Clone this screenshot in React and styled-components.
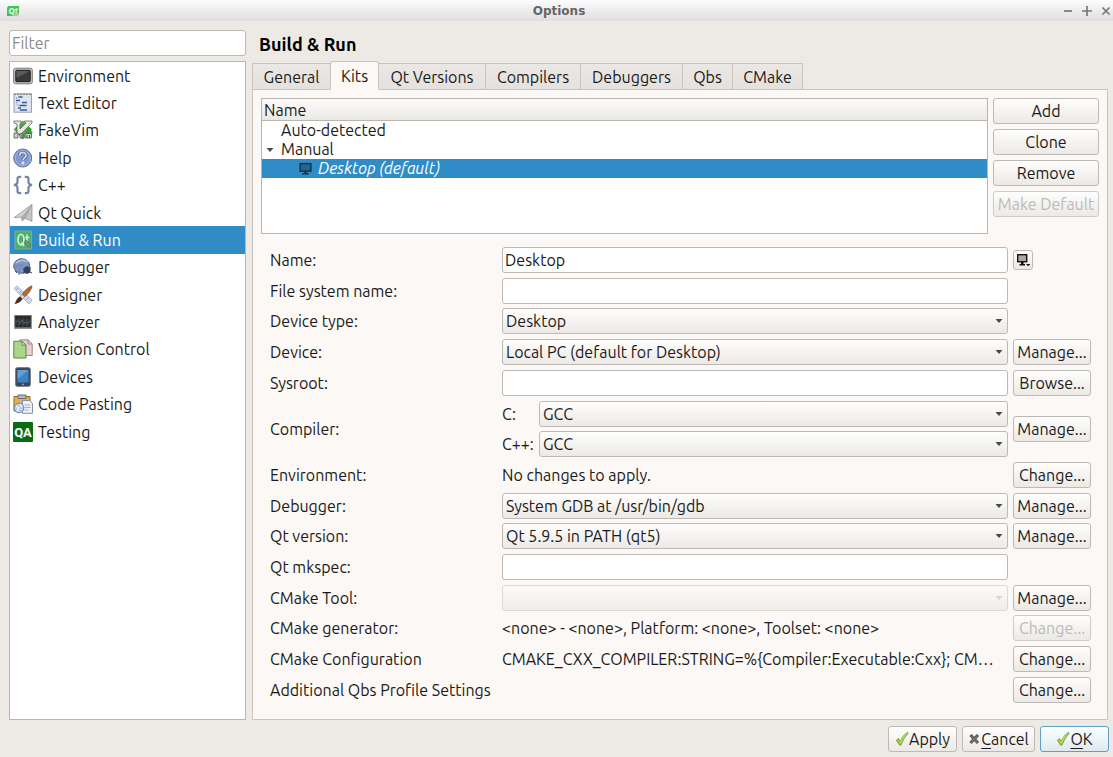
import React from "react";
import styled, { createGlobalStyle, css } from "styled-components";

const GlobalStyle = createGlobalStyle`
  *, *::before, *::after { box-sizing: border-box; }
  body { margin: 0; background: #edeae6; }
  body, button, input, select {
    font-family: Ubuntu, "Noto Sans", "Open Sans", sans-serif;
    font-size: 16px;
    color: #1a1a1a;
  }
  ul { list-style: none; margin: 0; padding: 0; }
`;

const raised = css`
  border: 1px solid #bdb9b6;
  border-radius: 3px;
  background: linear-gradient(#fefefd, #ece9e6);
`;

const Dialog = styled.div`
  display: flex;
  flex-direction: column;
  min-height: 100vh;
`;

const TitleBar = styled.header`
  display: grid;
  grid-template-columns: 1fr auto 1fr;
  align-items: center;
  height: 21px;
  padding: 0 1px 0 6px;
  background: linear-gradient(#fdfdfd, #dfdddd);
`;

const WindowTitle = styled.h1`
  margin: 0;
  font-family: "DejaVu Sans", sans-serif;
  font-size: 12px;
  font-weight: 700;
  line-height: 20px;
  color: #666;
`;

const WindowButtons = styled.div`
  display: flex;
  justify-content: flex-end;
  gap: 6px;
`;

const WindowButton = styled.button`
  display: flex;
  width: 13px;
  height: 18px;
  padding: 0;
  border: 0;
  align-items: center;
  justify-content: center;
  background: none;
`;

const Body = styled.div`
  flex: 1;
  display: grid;
  grid-template-columns: 237px minmax(0, 1fr);
  gap: 6px;
  padding: 9px 5px 0 9px;
`;

const Sidebar = styled.nav`
  display: flex;
  flex-direction: column;
  gap: 5px;
`;

const TextBox = styled.input`
  width: 100%;
  height: 26px;
  padding: 0 2px;
  border: 1px solid #bdb9b6;
  border-radius: 3px;
  background: #fff;
  outline: none;
  &::placeholder { color: #8c8c8c; opacity: 1; }
`;

const CategoryList = styled.ul`
  flex: 1;
  display: grid;
  grid-template-rows: repeat(24, 1fr);
  border: 1px solid #b9b5b1;
  background: #fff;
`;

const Category = styled.li`
  display: flex;
  align-items: center;
  gap: 5px;
  padding-left: 3px;
  line-height: 22px;
  background: ${(p) => (p.$selected ? "#308cc6" : "transparent")};
  color: ${(p) => (p.$selected ? "#fff" : "inherit")};
  svg { flex: none; }
`;

const Main = styled.main`
  display: flex;
  flex-direction: column;
  min-width: 0;
`;

const PageTitle = styled.h2`
  margin: 0;
  padding: 0 7px;
  height: 30px;
  font-size: 18px;
  line-height: 28px;
  color: #000;
`;

const TabBar = styled.div`
  display: flex;
  align-items: flex-end;
  height: 30px;
  margin-bottom: -1px;
  z-index: 1;
`;

const Tab = styled.button`
  width: ${(p) => p.$width}px;
  height: ${(p) => (p.$active ? 29 : 27)}px;
  padding: 0;
  border: 1px solid #c9c4c1;
  border-right-width: ${(p) => (p.$last || p.$active ? 1 : 0)}px;
  border-left-width: ${(p) => (p.$afterActive ? 0 : 1)}px;
  border-bottom-color: ${(p) => (p.$active ? "#fcf8f5" : "#c9c4c1")};
  border-radius: ${(p) => (p.$active ? "3px 3px 0 0" : "0")};
  background: ${(p) => (p.$active ? "#fcf8f5" : "linear-gradient(#ebe7e4, #e5e1de)")};
  white-space: nowrap;
`;

const Panel = styled.section`
  flex: 1;
  display: flex;
  flex-direction: column;
  gap: 13px;
  padding: 8px 8px 16px;
  border: 1px solid #c9c4c1;
  background: #fcf8f5;
`;

const KitArea = styled.div`
  display: flex;
  gap: 5px;
`;

const KitTree = styled.div`
  flex: 1;
  height: 136px;
  border: 1px solid #b9b5b1;
  background: #fff;
`;

const TreeHeader = styled.div`
  height: 22px;
  padding: 0 2px;
  border-bottom: 1px solid #b9b5b1;
  background: linear-gradient(#fcfbfa, #e9e8e4);
  line-height: 23px;
`;

const TreeRow = styled.li`
  display: flex;
  align-items: center;
  height: 19px;
  line-height: 19px;
  padding-left: ${(p) => (p.$level === 2 ? 37 : 2)}px;
  gap: ${(p) => (p.$level === 2 ? 6 : 5)}px;
  background: ${(p) => (p.$selected ? "#308cc6" : "transparent")};
  color: ${(p) => (p.$selected ? "#fff" : "inherit")};
  font-style: ${(p) => (p.$selected ? "italic" : "normal")};
`;

const BranchMark = styled.span`
  display: flex;
  justify-content: center;
  width: 12px;
`;

const KitActions = styled.div`
  display: flex;
  flex-direction: column;
  gap: 5px;
  width: 106px;
`;

const PushButton = styled.button`
  ${raised}
  display: flex;
  align-items: center;
  justify-content: center;
  width: ${(p) => (p.$width ? p.$width + "px" : "100%")};
  height: 26px;
  padding: 0;
  white-space: nowrap;
  &:disabled { color: #bdbab8; border-color: #cfcbc8; }
  ${(p) => p.$default && css`
    border-color: #5f9fc9;
    background: linear-gradient(#fdfeff, #dfe9f0);
  `}
  u { text-underline-offset: 3px; }
`;

const IconButton = styled.button`
  ${raised}
  display: flex;
  align-items: center;
  justify-content: center;
  width: 20px;
  height: 20px;
  padding: 0;
`;

const KitForm = styled.form`
  flex: 1;
  display: grid;
  grid-template-columns: 227px minmax(0, 1fr) 78px;
  grid-template-rows: repeat(15, 26px);
  column-gap: 5px;
  align-content: space-between;
  align-items: center;
  padding: 0 8px 0 9px;
`;

const Label = styled.label`
  grid-column: 1;
  grid-row: ${(p) => p.$row} / span ${(p) => p.$span || 1};
  white-space: nowrap;
`;

const Field = styled.div`
  grid-column: 2;
  grid-row: ${(p) => p.$row};
  display: flex;
  align-items: center;
  gap: 4px;
  min-width: 0;
`;

const Action = styled.div`
  grid-column: 3;
  grid-row: ${(p) => p.$row} / span ${(p) => p.$span || 1};
`;

const Value = styled.output`
  white-space: nowrap;
`;

const LanguageLabel = styled.label`
  flex: none;
  width: 33px;
`;

const SelectWrap = styled.div`
  position: relative;
  flex: 1;
  svg {
    position: absolute;
    top: 11px;
    right: 5px;
    pointer-events: none;
  }
`;

const Select = styled.select`
  ${raised}
  appearance: none;
  display: block;
  width: 100%;
  height: 26px;
  padding: 0 20px 0 3px;
  &:disabled { border-color: #d0ccc9; }
`;

const Footer = styled.footer`
  display: flex;
  justify-content: flex-end;
  gap: 5px;
  padding: 6px 4px 5px;
`;

const Arrow = ({ color = "#4a4a4a" }) => (
  <svg width="8" height="4" viewBox="0 0 8 4" aria-hidden="true">
    <path d="M0.5 0h7L4 4z" fill={color} />
  </svg>
);

const Monitor = ({ size = 12, screen = "#999", stroke = "#222" }) => (
  <svg width={size} height={size} viewBox="0 0 12 12" aria-hidden="true">
    <rect x="1" y="1.5" width="10" height="7" fill={screen} stroke={stroke} strokeWidth="1.3" />
    <path d="M5 9h2v1.2h2v1.3H3v-1.3h2z" fill={stroke} />
  </svg>
);

const MonitorMenu = () => (
  <svg width="16" height="16" viewBox="0 0 16 16" aria-hidden="true">
    <rect x="2.7" y="2.7" width="9" height="7" fill="#aaa" stroke="#111" strokeWidth="1.4" />
    <path d="M6 10h2.5v2h1.5v1.5H4.5V12H6z" fill="#111" />
    <path d="M11 12h4.4l-2.2 2.2z" fill="#111" />
  </svg>
);

const Check = () => (
  <svg width="14" height="16" viewBox="0 0 14 16" aria-hidden="true">
    <path d="M1.3 9.2 3.5 7.6 5.4 10.3C7 6.2 9 3.6 12.6 1.3L13 2.7C10 5.6 8 9.2 6 14.2H4.6z" fill="#9ccc3c" stroke="#6f9c38" strokeWidth="0.8" />
    <path d="M5.3 12C7 8 8.6 5.4 11.4 3" fill="none" stroke="#cdea8c" strokeWidth="0.9" />
  </svg>
);

const Cross = () => (
  <svg width="13" height="12" viewBox="0 0 13 12" aria-hidden="true">
    <path d="m2.5 2 7.5 8M10 2 2.5 10" stroke="#555" strokeWidth="3.2" />
    <path d="m3 2.6 6.5 6.9M9.5 2.6 3 9.5" stroke="#777" strokeWidth="1.2" />
  </svg>
);

const AppLogo = () => (
  <svg width="14" height="14" viewBox="0 0 14 14" aria-hidden="true">
    <path d="M2.5 2H13v8L11 12H1V3.5z" fill="#3fc35b" />
    <text x="2.4" y="9.6" fontFamily="Noto Sans, sans-serif" fontSize="8" fontWeight="700" fill="#e9fbe9">Qt</text>
    <path d="m7 10 3 3 3-3-2-1z" fill="#b9c1ba" />
  </svg>
);

const glyphs = {
  environment: (
    <>
      <rect x="0.7" y="2.2" width="18.6" height="15.6" rx="2" fill="#c9c9c9" stroke="#777" />
      <rect x="2.8" y="4.3" width="14.4" height="11.4" rx="0.8" fill="#3a3a3a" stroke="#1b1b1b" />
      <path d="M3.5 5h13L3.5 12z" fill="#5c5c5c" />
    </>
  ),
  editor: (
    <>
      <rect x="1" y="0.8" width="17.5" height="18.4" fill="#dfe4f1" stroke="#9aa0b2" />
      <path d="M1 1.3h17.5" stroke="#777" strokeDasharray="2 1" />
      <path d="M5.5 4h4M3 7.5h4M9 9.5h5M6.5 12.5h7M5 15h3M7 17h7" stroke="#3a5a9f" strokeWidth="1.3" />
      <path d="M3.5 4v2M3.5 9c0 3 1 3.5 2.5 3.5" stroke="#9fb0d8" fill="none" />
    </>
  ),
  vim: (
    <>
      <path d="m10 0.5 9 9-9 10-9.5-10z" fill="#55a94c" />
      <path d="M1 1h7v2L7 4v5l6-6-1.5-1V1H19v2L8 14H4V4L1 3z" fill="#e4e8e1" stroke="#4f584e" strokeWidth="0.7" />
      <path d="M15 8c2-1 4 1 3 3 2 0 2 3 0 3h-5c-1-2 0-3 1-3 0-1 0-2 1-3z" fill="#38a032" />
      <path d="M1 13h4v5H1zM7 14h3v4H7zM12 13.5h6.5V18H12z" fill="#c8cdc5" stroke="#555" strokeWidth="0.8" />
      <path d="M9 15v4M14 15v3M16.5 15v3" stroke="#555" />
    </>
  ),
  help: (
    <>
      <circle cx="9.7" cy="10" r="9" fill="#8199cd" stroke="#5d72a4" />
      <circle cx="9.7" cy="10" r="7.4" fill="none" stroke="#b3c2e3" strokeWidth="0.8" />
      <path d="M6.5 7.8C6.5 3.5 13 3.6 13 7.3c0 2.5-3 2.6-3 5" fill="none" stroke="#42588d" strokeWidth="3.2" />
      <path d="M6.5 7.8C6.5 3.5 13 3.6 13 7.3c0 2.5-3 2.6-3 5" fill="none" stroke="#c9d5ee" strokeWidth="1.9" />
      <circle cx="10" cy="15" r="1.4" fill="#e0e7f6" />
    </>
  ),
  cpp: (
    <g fill="none" stroke="#7584a8" strokeWidth="2.2">
      <path d="M8.2 1.8H6.8Q4.5 1.8 4.5 4v3.2Q4.5 9.5 1 10q3.500 .5 3.500 2.800V16q0 2.200 2.300 2.200h1.400" />
      <path d="M11.8 1.8h1.4q2.3 0 2.3 2.2v3.2q0 2.3 3.500 2.800-3.500 .5-3.500 2.800V16q0 2.200-2.300 2.200h-1.400" />
    </g>
  ),
  quick: (
    <>
      <path d="M18.8 1.5v16.7l-6.5-3-3 2.8-1-3.8-7 .3z" fill="#d4d4d4" stroke="#909090" strokeWidth="0.8" />
      <path d="M18.8 1.5 8.3 14.2l1 3.8 3-2.8z" fill="#aaa" />
      <path d="m18.8 1.5-6.5 13.7 6.5 3z" fill="#c6c6c6" stroke="#999" strokeWidth="0.6" />
    </>
  ),
  build: (
    <>
      <path d="M2 1h16.5v18H2z" fill="#4fae6c" stroke="#7fb98c" strokeWidth="0.8" />
      <ellipse cx="8" cy="9.6" rx="3" ry="5.2" fill="none" stroke="#cdeed8" strokeWidth="1.8" />
      <path d="m8.5 12.5 2.5 3.500M14 4.500V13.500q0 1.200 1.800 1.200M12.300 7.500h4" stroke="#cdeed8" strokeWidth="1.600" fill="none" />
      <path d="m11.500 11.500 1.500-1.500 4.500 4.500.5 2-2 .5-3.500-3z" fill="#7d8d88" stroke="#4b655d" strokeWidth="0.6" />
    </>
  ),
  debugger: (
    <>
      <ellipse cx="8.7" cy="9" rx="8" ry="7.3" fill="#7f96c0" stroke="#4c628d" />
      <path d="M2.5 6Q9 1 14.5 5" fill="none" stroke="#b7c5e0" strokeWidth="1.4" />
      <path d="M2 10q4-3 8-2M6 15q-1-4 4-7" stroke="#6d84b3" fill="none" />
      <circle cx="14" cy="13" r="3.6" fill="#33425f" />
      <path d="m10 12 9 4M18 10.5 10 16M14 9v8" stroke="#33425f" />
      <path d="m2 14 2 2M6 16v2" stroke="#54688e" />
    </>
  ),
  designer: (
    <>
      <path d="M1 3.5 4 1l15 14-3 4z" fill="#d3dcf0" stroke="#a9b4cd" />
      <path d="m5 3-1.5 2M8 6 6.5 8M11 9l-1.5 2M15 13l-1.5 2" stroke="#8d9bc0" />
      <path d="M19 .8c-4 1.4-7.5 5-10 8.5l2.5 2.5C15 9 18.5 5 19 .8z" fill="#b96a32" stroke="#6c3c1c" strokeWidth="0.7" />
      <path d="m9 9.3 2.5 2.5-2 2.2L7 11.6z" fill="#ddd" stroke="#777" strokeWidth="0.6" />
      <path d="M7 11.6 9.5 14c-1.5 3-5 4.8-8 5C3 17 3.5 13 7 11.6z" fill="#4c2d1b" />
    </>
  ),
  analyzer: (
    <>
      <rect x="1.8" y="3.5" width="16.4" height="13" fill="#25282b" stroke="#74777a" />
      <path d="M3 8h14M3 12h14M6 4.5v11M10 4.5v11M14 4.5v11" stroke="#4c5257" strokeWidth="0.7" />
      <path d="m3 10 2-1 2 2 2-3 2 3 2-1 2 1 2-2" fill="none" stroke="#6b7378" strokeWidth="0.8" />
      <path d="M2 16h16" stroke="#a5a7a9" />
    </>
  ),
  version: (
    <>
      <path d="M7 .8h8l4.2 4v11.7H7z" fill="#e8d0d2" stroke="#a58486" />
      <path d="M15 1v4h4" fill="none" stroke="#a58486" />
      <path d="M.8 2.2h8.2l4 4V19H.8z" fill="#a9d689" stroke="#5c8647" />
      <path d="M9 2.2v4h4z" fill="#dff1d2" stroke="#5c8647" />
    </>
  ),
  devices: (
    <>
      <rect x="2.7" y="0.7" width="14.6" height="18.6" rx="1.5" fill="#3a4452" stroke="#697180" />
      <path d="M4.5 3h11v12.5h-11z" fill="#3c82c4" />
      <path d="M4.5 3h11L4.5 12z" fill="#62a0d8" />
      <circle cx="10" cy="17.4" r="0.8" fill="#b7bec7" />
    </>
  ),
  pasting: (
    <>
      <path d="M1 2.5h16V17H1z" fill="#e3b24c" stroke="#8d672a" />
      <path d="M5 1h8v3.5H5z" fill="#b9bbbf" stroke="#6b6b6b" />
      <path d="M9.5 6.5h7l3 3v9.8h-10z" fill="#edf1fa" stroke="#8490ab" />
      <path d="M11.5 11h6M11.5 13.5h6M11.5 16h4" stroke="#a3adc8" />
      <circle cx="6" cy="14" r="4.8" fill="#b8cbe8" stroke="#6f86b2" />
      <path d="m3 12 3 2-2 3M7 10l2 3" stroke="#f0f5fc" strokeWidth="1.4" fill="none" />
    </>
  ),
  testing: (
    <>
      <rect x="0" y="0" width="20" height="20" rx="1" fill="#0b6b12" />
      <text x="10" y="15" textAnchor="middle" fontFamily="Roboto, sans-serif" fontSize="13" fontWeight="700" fill="#fff">QA</text>
    </>
  ),
};

const categories = [
  ["environment", "Environment"],
  ["editor", "Text Editor"],
  ["vim", "FakeVim"],
  ["help", "Help"],
  ["cpp", "C++"],
  ["quick", "Qt Quick"],
  ["build", "Build & Run"],
  ["debugger", "Debugger"],
  ["designer", "Designer"],
  ["analyzer", "Analyzer"],
  ["version", "Version Control"],
  ["devices", "Devices"],
  ["pasting", "Code Pasting"],
  ["testing", "Testing"],
];

const tabs = [
  ["General", 78],
  ["Kits", 49],
  ["Qt Versions", 106],
  ["Compilers", 95],
  ["Debuggers", 102],
  ["Qbs", 50],
  ["CMake", 71],
];

const Combo = ({ id, value, disabled }) => (
  <SelectWrap>
    <Select id={id} disabled={disabled} defaultValue={value}>
      <option>{value}</option>
    </Select>
    <Arrow color={disabled ? "#d8d5d2" : undefined} />
  </SelectWrap>
);

const rows = [
  { row: 1, id: "name", label: "Name:", kind: "text", value: "Desktop", action: "icon" },
  { row: 2, id: "fsname", label: "File system name:", kind: "text", value: "" },
  { row: 3, id: "devtype", label: "Device type:", kind: "combo", value: "Desktop" },
  { row: 4, id: "device", label: "Device:", kind: "combo", value: "Local PC (default for Desktop)", action: "Manage..." },
  { row: 5, id: "sysroot", label: "Sysroot:", kind: "text", value: "", action: "Browse..." },
  { row: 6, span: 2, id: "compiler-c", label: "Compiler:", kind: "compilers", action: "Manage..." },
  { row: 8, id: "environment", label: "Environment:", kind: "value", value: "No changes to apply.", action: "Change..." },
  { row: 9, id: "debugger", label: "Debugger:", kind: "combo", value: "System GDB at /usr/bin/gdb", action: "Manage..." },
  { row: 10, id: "qt", label: "Qt version:", kind: "combo", value: "Qt 5.9.5 in PATH (qt5)", action: "Manage..." },
  { row: 11, id: "mkspec", label: "Qt mkspec:", kind: "text", value: "" },
  { row: 12, id: "cmake", label: "CMake Tool:", kind: "combo", value: "", disabled: true, action: "Manage..." },
  { row: 13, id: "generator", label: "CMake generator:", kind: "value", value: "<none> - <none>, Platform: <none>, Toolset: <none>", action: "Change...", actionDisabled: true },
  { row: 14, id: "config", label: "CMake Configuration", kind: "value", value: "CMAKE_CXX_COMPILER:STRING=%{Compiler:Executable:Cxx}; CM…", action: "Change..." },
  { row: 15, id: "qbs", label: "Additional Qbs Profile Settings", kind: "none", action: "Change..." },
];

const FormRow = ({ row, span, id, label, kind, value, disabled, action, actionDisabled }) => (
  <>
    <Label as={kind === "none" ? "span" : "label"} htmlFor={kind === "none" ? undefined : id} $row={row} $span={span}>{label}</Label>
    {kind === "text" && <Field $row={row}><TextBox id={id} defaultValue={value} /></Field>}
    {kind === "combo" && <Field $row={row}><Combo id={id} value={value} disabled={disabled} /></Field>}
    {kind === "value" && <Field $row={row}><Value id={id}>{value}</Value></Field>}
    {kind === "compilers" && (
      <>
        <Field $row={row}><LanguageLabel htmlFor={id}>C:</LanguageLabel><Combo id={id} value="GCC" /></Field>
        <Field $row={row + 1}><LanguageLabel htmlFor="compiler-cxx">C++:</LanguageLabel><Combo id="compiler-cxx" value="GCC" /></Field>
      </>
    )}
    {action && (
      <Action $row={row} $span={span}>
        {action === "icon"
          ? <IconButton type="button" aria-label="Kit icon"><MonitorMenu /></IconButton>
          : <PushButton type="button" disabled={actionDisabled}>{action}</PushButton>}
      </Action>
    )}
  </>
);

export default function App() {
  return (
    <Dialog>
      <GlobalStyle />
      <TitleBar>
        <AppLogo />
        <WindowTitle>Options</WindowTitle>
        <WindowButtons>
          {[["Minimize", "M1 5h8"], ["Maximize", "M0 5h10M5 0v10"], ["Close", "m1.5 1.5 7 7M8.5 1.5 1.5 8.5"]].map(([name, d]) => (
            <WindowButton key={name} type="button" aria-label={name}>
              <svg width="10" height="10" viewBox="0 0 10 10" aria-hidden="true">
                <path d={d} stroke="#777" strokeWidth="1.7" />
              </svg>
            </WindowButton>
          ))}
        </WindowButtons>
      </TitleBar>
      <Body>
        <Sidebar>
          <TextBox placeholder="Filter" aria-label="Filter" />
          <CategoryList>
            {categories.map(([icon, name]) => (
              <Category key={icon} $selected={icon === "build"}>
                <svg width="20" height="20" viewBox="0 0 20 20" aria-hidden="true">{glyphs[icon]}</svg>
                {name}
              </Category>
            ))}
          </CategoryList>
        </Sidebar>
        <Main>
          <PageTitle>Build &amp; Run</PageTitle>
          <TabBar role="tablist">
            {tabs.map(([name, width], i) => (
              <Tab key={name} type="button" role="tab" aria-selected={i === 1} $width={width} $active={i === 1} $afterActive={i === 2} $last={i === tabs.length - 1}>
                {name}
              </Tab>
            ))}
          </TabBar>
          <Panel>
            <KitArea>
              <KitTree>
                <TreeHeader>Name</TreeHeader>
                <ul role="tree" aria-label="Kits">
                  <TreeRow role="treeitem" $level={1}><BranchMark />Auto-detected</TreeRow>
                  <TreeRow role="treeitem" aria-expanded="true" $level={1}><BranchMark><Arrow /></BranchMark>Manual</TreeRow>
                  <TreeRow role="treeitem" aria-selected="true" $level={2} $selected>
                    <Monitor size={13} screen="#24648f" stroke="#16324a" />Desktop (default)
                  </TreeRow>
                </ul>
              </KitTree>
              <KitActions>
                <PushButton type="button">Add</PushButton>
                <PushButton type="button">Clone</PushButton>
                <PushButton type="button">Remove</PushButton>
                <PushButton type="button" disabled>Make Default</PushButton>
              </KitActions>
            </KitArea>
            <KitForm>
              {rows.map((r) => <FormRow key={r.id} {...r} />)}
            </KitForm>
          </Panel>
        </Main>
      </Body>
      <Footer>
        <PushButton type="button" $width={69}><Check />Apply</PushButton>
        <PushButton type="button" $width={73}><Cross /><span><u>C</u>ancel</span></PushButton>
        <PushButton type="button" $width={69} $default><Check /><span><u>O</u>K</span></PushButton>
      </Footer>
    </Dialog>
  );
}
